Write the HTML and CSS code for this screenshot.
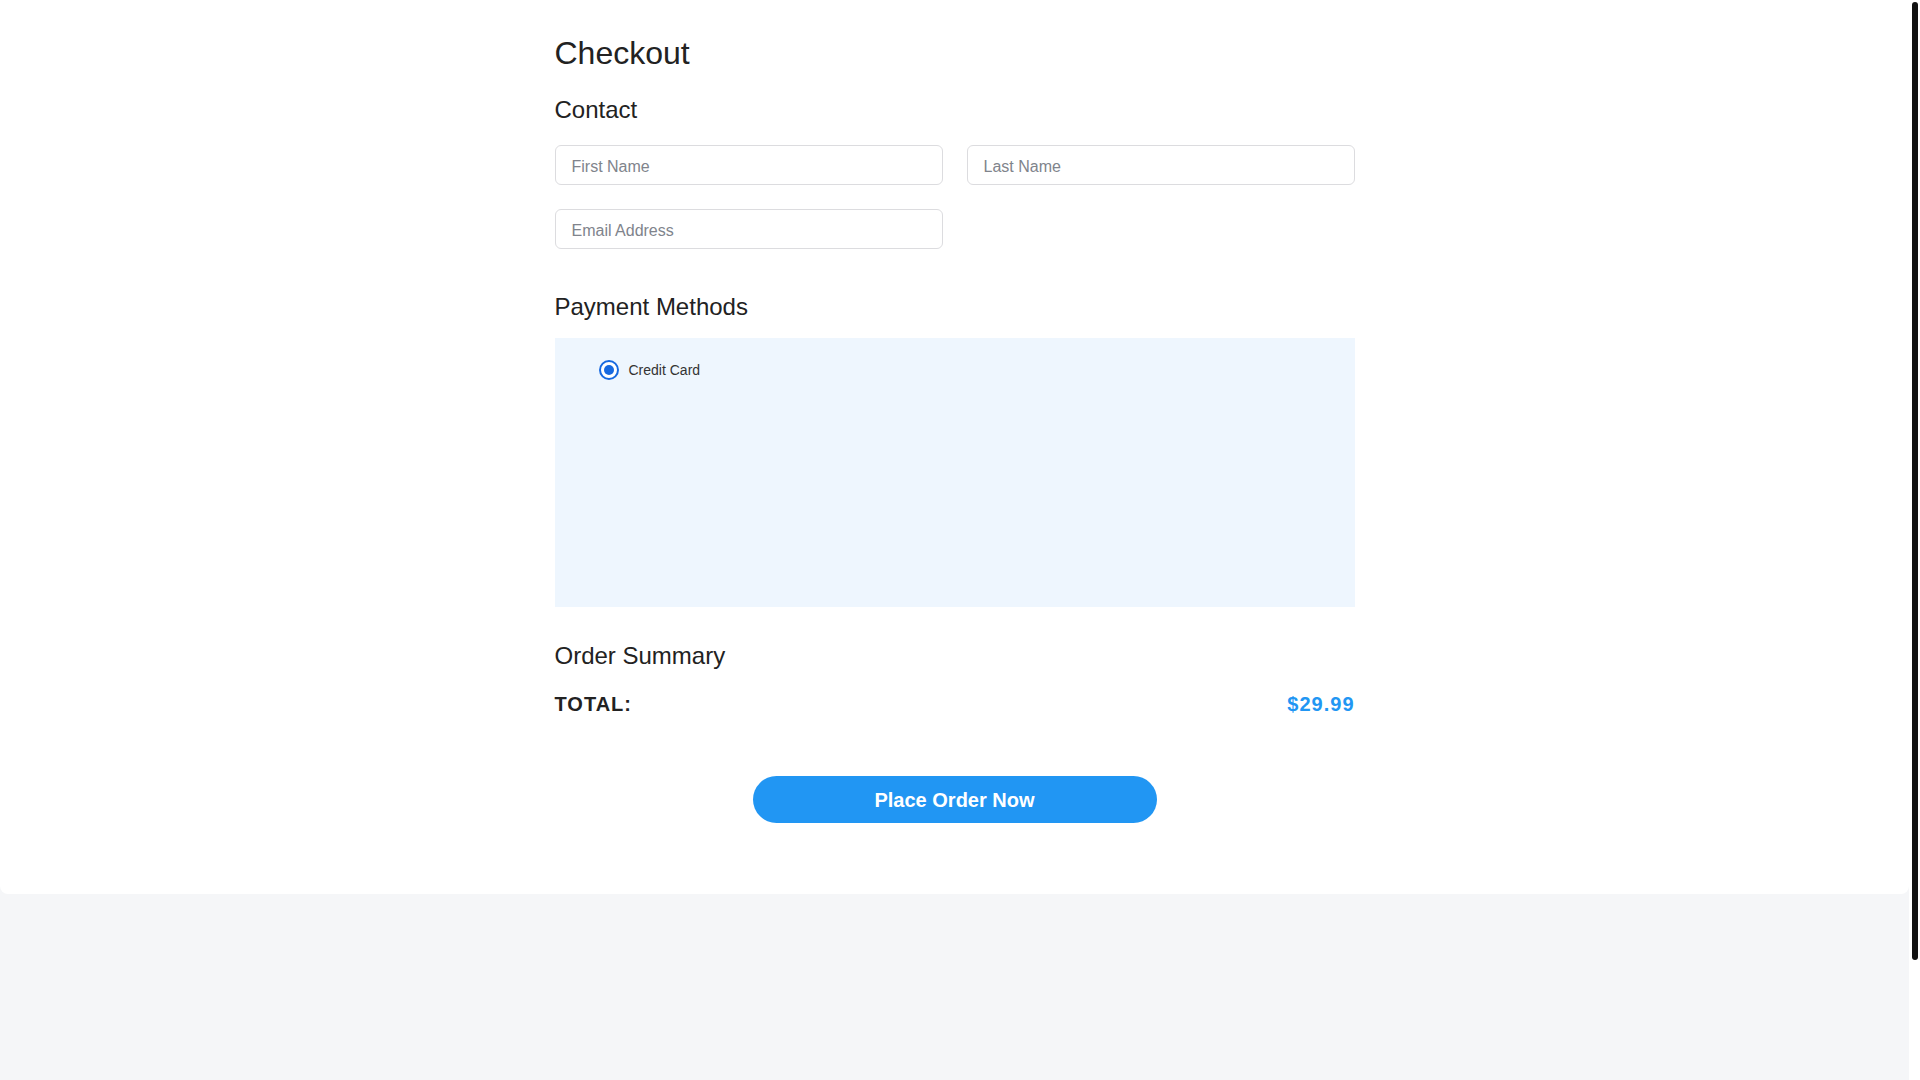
FILE: index.html
```html
<!DOCTYPE html>
<html lang="en">
<head>
<meta charset="utf-8">
<title>Checkout</title>
<link rel="stylesheet" href="styles.css">
</head>
<body>
<div class="page">
  <div class="container">
    <h1 class="title">Checkout</h1>
    <h2 class="section contact-title">Contact</h2>
    <div class="fields">
      <input class="field" type="text" placeholder="First Name">
      <input class="field" type="text" placeholder="Last Name">
      <input class="field" type="email" placeholder="Email Address">
    </div>
    <h2 class="section payment-title">Payment Methods</h2>
    <div class="payment-panel">
      <label class="radio-row">
        <span class="radio"><span class="radio-dot"></span></span>
        <span class="radio-label">Credit Card</span>
      </label>
    </div>
    <h2 class="section summary-title">Order Summary</h2>
    <div class="total-row">
      <span class="total-label">TOTAL:</span>
      <span class="total-value">$29.99</span>
    </div>
    <div class="actions">
      <button class="order-btn" type="button">Place Order Now</button>
    </div>
  </div>
</div>
<div class="footer-space"></div>
<div class="scrollbar"><div class="scrollbar-thumb"></div></div>
</body>
</html>
```

FILE: styles.css
```css
html {
  background: #f5f6f8;
}
body {
  margin: 0;
  background: #f5f6f8;
  font-family: "Liberation Sans", Arial, sans-serif;
  color: #222222;
}
.page {
  background: #ffffff;
  border-radius: 0 0 8px 8px;
  padding: 35px 0 71px;
  margin-right: 11px;
}
.container {
  width: 800px;
  margin: 0 auto;
}
.title {
  font-size: 32px;
  font-weight: 400;
  line-height: 37px;
  margin: 0;
  color: #222222;
}
.section {
  font-size: 24px;
  font-weight: 400;
  line-height: 28px;
  margin: 0;
  color: #222222;
}
.contact-title {
  margin-top: 24px;
}
.fields {
  margin-top: 21px;
  display: grid;
  grid-template-columns: 1fr 1fr;
  column-gap: 24px;
  row-gap: 24px;
}
.field {
  box-sizing: border-box;
  height: 40px;
  border: 1px solid #dcdcdf;
  border-radius: 6px;
  padding: 4px 16px 0;
  font-family: "Liberation Sans", Arial, sans-serif;
  font-size: 16px;
  color: #222222;
  background: #ffffff;
  outline: none;
}
.field::placeholder {
  color: #80848c;
}
.payment-title {
  margin-top: 44px;
}
.payment-panel {
  margin-top: 17px;
  height: 269px;
  box-sizing: border-box;
  background: #eef6fe;
  padding: 22px 44px;
}
.radio-row {
  display: flex;
  align-items: center;
  gap: 10px;
}
.radio {
  box-sizing: border-box;
  width: 20px;
  height: 20px;
  border-radius: 50%;
  border: 2px solid #1769e0;
  background: #ffffff;
  display: flex;
  align-items: center;
  justify-content: center;
}
.radio-dot {
  width: 10px;
  height: 10px;
  border-radius: 50%;
  background: #1769e0;
}
.radio-label {
  font-size: 14px;
  color: #333333;
}
.summary-title {
  margin-top: 35px;
}
.total-row {
  margin-top: 23px;
  display: flex;
  justify-content: space-between;
  align-items: center;
  font-size: 20px;
  font-weight: 700;
  letter-spacing: 1px;
  line-height: 23px;
}
.total-label {
  color: #222222;
}
.total-value {
  color: #2196f3;
}
.actions {
  margin-top: 60px;
  display: flex;
  justify-content: center;
}
.order-btn {
  width: 404px;
  height: 47px;
  border: none;
  border-radius: 24px;
  background: #2196f3;
  color: #ffffff;
  font-family: "Liberation Sans", Arial, sans-serif;
  font-size: 20px;
  font-weight: 700;
  padding: 2px 0 0;
  cursor: pointer;
}
.footer-space {
  height: 321px;
  margin-right: 11px;
}
.scrollbar {
  position: fixed;
  top: 0;
  right: 0;
  width: 11px;
  height: 100vh;
  background: #ffffff;
}
.scrollbar-thumb {
  margin: 2px 2px 0 3px;
  height: 958px;
  border-radius: 3px;
  background: #111111;
}
```
